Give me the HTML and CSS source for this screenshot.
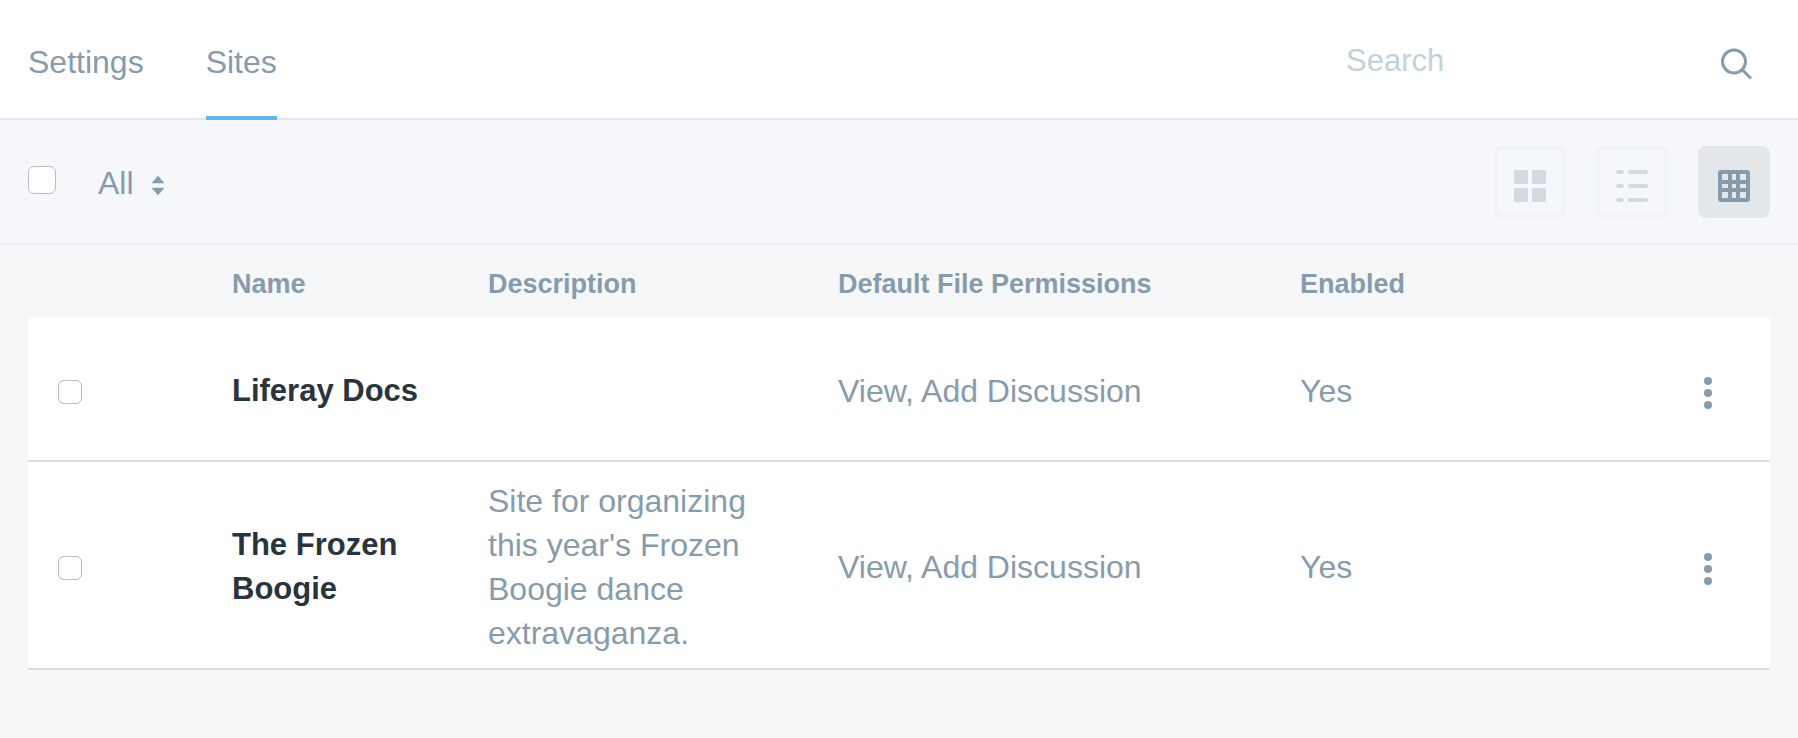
FILE: index.html

```html
<!DOCTYPE html>
<html lang="en">
<head>
    <meta charset="UTF-8">
    <meta name="viewport" content="width=device-width, initial-scale=1.0">
    <title>Sites</title>
    <link rel="stylesheet" href="styles.css">
</head>
<body>
    <nav class="tabs">
        <a class="tab" href="#">Settings</a>
        <a class="tab active" href="#">Sites</a>
        <input class="search" type="text" placeholder="Search">
        <svg class="search-icon" viewBox="0 0 32 32" width="32" height="32">
            <circle cx="14" cy="13.5" r="11.5" fill="none" stroke="#869cad" stroke-width="3"/>
            <path d="M22.5 22 L31 30.5" fill="none" stroke="#869cad" stroke-width="3"/>
        </svg>
    </nav>

    <div class="toolbar">
        <input class="check check-large" type="checkbox">
        <span class="filter">All</span>
        <svg class="sort-icon" viewBox="0 0 12 19" width="12" height="19">
            <path d="M6 0 L12 7 H0 Z M6 19 L0 12 H12 Z" fill="#869cad" stroke="#869cad" stroke-width="0.5" stroke-linejoin="round"/>
        </svg>
        <div class="views">
            <button class="view">
                <svg viewBox="0 0 32 32" width="32" height="32" fill="#d3dae1">
                    <rect width="14" height="14" rx="1.5"/>
                    <rect x="18" width="14" height="14" rx="1.5"/>
                    <rect y="18" width="14" height="14" rx="1.5"/>
                    <rect x="18" y="18" width="14" height="14" rx="1.5"/>
                </svg>
            </button>
            <button class="view">
                <svg viewBox="0 0 32 32" width="32" height="32" fill="#d3dae1">
                    <rect y="0" width="8" height="4" rx="2"/>
                    <rect x="12" y="0" width="20" height="4" rx="2"/>
                    <rect y="14" width="8" height="4" rx="2"/>
                    <rect x="12" y="14" width="20" height="4" rx="2"/>
                    <rect y="28" width="8" height="4" rx="2"/>
                    <rect x="12" y="28" width="20" height="4" rx="2"/>
                </svg>
            </button>
            <button class="view active">
                <svg viewBox="0 0 32 32" width="32" height="32">
                    <rect width="32" height="32" rx="3" fill="#869cad"/>
                    <g fill="#e4e8eb">
                        <rect x="4" y="4" width="6" height="6"/>
                        <rect x="14" y="4" width="4" height="6"/>
                        <rect x="22" y="4" width="6" height="6"/>
                        <rect x="4" y="14" width="6" height="4"/>
                        <rect x="14" y="14" width="4" height="4"/>
                        <rect x="22" y="14" width="6" height="4"/>
                        <rect x="4" y="22" width="6" height="6"/>
                        <rect x="14" y="22" width="4" height="6"/>
                        <rect x="22" y="22" width="6" height="6"/>
                    </g>
                </svg>
            </button>
        </div>
    </div>

    <main class="content">
        <table class="sites">
            <thead>
                <tr>
                    <th class="col-check"></th>
                    <th class="col-name">Name</th>
                    <th class="col-desc">Description</th>
                    <th class="col-perm">Default File Permissions</th>
                    <th class="col-enabled">Enabled</th>
                    <th class="col-menu"></th>
                </tr>
            </thead>
            <tbody>
                <tr>
                    <td class="cell-check"><input class="check" type="checkbox"></td>
                    <td class="cell-name">Liferay Docs</td>
                    <td></td>
                    <td>View, Add Discussion</td>
                    <td>Yes</td>
                    <td class="cell-menu"><span class="dots"><i></i><i></i><i></i></span></td>
                </tr>
                <tr>
                    <td class="cell-check"><input class="check" type="checkbox"></td>
                    <td class="cell-name">The Frozen Boogie</td>
                    <td class="cell-desc">Site for organizing this year's Frozen Boogie dance extravaganza.</td>
                    <td>View, Add Discussion</td>
                    <td>Yes</td>
                    <td class="cell-menu"><span class="dots"><i></i><i></i><i></i></span></td>
                </tr>
            </tbody>
        </table>
    </main>
</body>
</html>
```

FILE: styles.css

```css
* {
    box-sizing: border-box;
}
body {
    margin: 0;
    min-height: 100vh;
    background-color: #f6f7f9;
    color: #869cad;
    font-family: "Liberation Sans", Arial, sans-serif;
    font-size: 32px;
    line-height: 44px;
}
.tabs {
    display: flex;
    align-items: center;
    height: 120px;
    padding: 0 46px 0 28px;
    background: #fff;
    border-bottom: 2px solid #e4e8ec;
}
.tab {
    display: flex;
    align-items: center;
    align-self: flex-start;
    height: 120px;
    margin-right: 62px;
    padding-top: 7px;
    color: #869cad;
    font-size: 32px;
    text-decoration: none;
    border-bottom: 4px solid transparent;
}
.tab.active {
    border-bottom-color: #65b5f0;
    margin-right: 0;
}
.search {
    width: 374px;
    margin-left: auto;
    margin-top: 4px;
    padding: 0;
    border: none;
    outline: none;
    background: none;
    color: #869cad;
    font: inherit;
    font-size: 31px;
}
.search::placeholder {
    color: #c5d1da;
    opacity: 1;
}
.search-icon {
    margin-top: 10px;
}
.toolbar {
    display: flex;
    align-items: center;
    height: 125px;
    padding: 0 28px;
    background: #f5f7fa;
    border-bottom: 2px solid #eef0f3;
}
.check {
    appearance: none;
    display: block;
    width: 24px;
    height: 24px;
    margin: 2px 0 0;
    background: #fff;
    border: 1.5px solid #bdbdbd;
    border-radius: 6px;
}
.check-large {
    width: 28px;
    height: 28px;
    margin-top: -3px;
}
.filter {
    margin-left: 42px;
    margin-top: 3px;
    font-size: 32px;
}
.sort-icon {
    margin-left: 18px;
    margin-top: 8px;
}
.views {
    display: flex;
    gap: 30px;
    margin-left: auto;
    margin-top: 1px;
}
.view {
    display: flex;
    align-items: center;
    justify-content: center;
    width: 72px;
    height: 72px;
    padding: 8px 0 0;
    background: none;
    border: 4px solid #f1f4f6;
    border-radius: 8px;
}
.view.active {
    background: #e4e8eb;
    border-color: #e4e8eb;
}
.content {
    padding: 0 28px;
}
.sites {
    width: 100%;
    table-layout: fixed;
    border-collapse: collapse;
}
.sites th {
    height: 73px;
    padding: 4px 0 0;
    font-size: 27px;
    font-weight: bold;
    text-align: left;
}
.sites td {
    padding: 4px 30px 0 0;
    background: #fff;
    border-bottom: 2px solid #dcdcdc;
}
.sites tbody tr:first-child td {
    height: 143px;
}
.sites tbody tr:last-child td {
    height: 208px;
}
.col-check {
    width: 204px;
}
.col-name {
    width: 256px;
}
.col-desc {
    width: 350px;
}
.col-perm {
    width: 462px;
}
.col-menu {
    width: 100px;
}
.sites .cell-check {
    padding-left: 30px;
}
.sites .cell-name {
    color: #29353d;
    font-size: 31px;
    font-weight: bold;
}
.sites .cell-desc {
    padding-right: 60px;
}
.dots {
    display: flex;
    flex-direction: column;
    gap: 4px;
    margin-left: 34px;
    margin-top: 4px;
}
.dots i {
    width: 8px;
    height: 8px;
    border-radius: 50%;
    background: #869cad;
}
```
